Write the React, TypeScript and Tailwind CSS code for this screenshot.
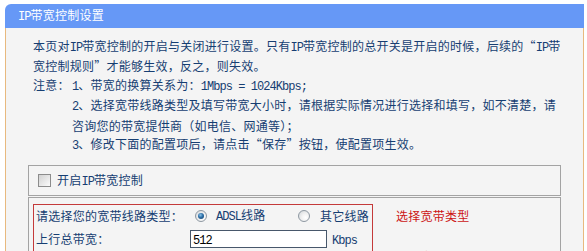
import React from "react";

const L = ({ children }: { children: React.ReactNode }) => (
  <span className="font-['Liberation_Mono',monospace] tracking-[-0.95px]">{children}</span>
);

const Radio = ({ checked }: { checked?: boolean }) => (
  <span className="inline-flex w-[12px] h-[12px] shrink-0 items-center justify-center rounded-full border border-[#8e98a2] bg-[radial-gradient(circle_at_65%_65%,#ffffff_0%,#f2f2f2_40%,#cfd3d7_100%)]">
    {checked ? (
      <span className="block w-[6px] h-[6px] rounded-full bg-[radial-gradient(circle_at_40%_35%,#8cc4ea_0%,#2d6ea6_45%,#143d66_100%)]" />
    ) : null}
  </span>
);

export default function App() {
  return (
    <div className="w-[587px] h-[251px] overflow-hidden bg-white pt-[4px] pl-[5px] font-['Noto_Sans_CJK_SC',sans-serif] text-[12px] text-[#163e72] tracking-[0.25px]">
      <div className="w-[579px]">
        <div className="h-[24px] bg-[#6698f6] rounded-tl-[6px] flex items-center pl-[13px] text-white leading-none">
          <span>
            <L>IP</L>带宽控制设置
          </span>
        </div>
        <div className="border-l border-r border-[#e8b97e] bg-[#f4f4f4] pt-[9px] pb-[20px]">
          <div className="pl-[27px] leading-[18.4px] whitespace-nowrap">
            <div>
              本页对<L>IP</L>带宽控制的开启与关闭进行设置。只有<L>IP</L>带宽控制的总开关是开启的时候，后续的“<L>IP</L>带
            </div>
            <div>宽控制规则”才能够生效，反之，则失效。</div>
            <div className="flex">
              <div className="w-[39px]">注意：</div>
              <div>
                <div>
                  <L>1</L>、带宽的换算关系为：<L>1Mbps = 1024Kbps;</L>
                </div>
                <div>
                  <L>2</L>、选择宽带线路类型及填写带宽大小时，请根据实际情况进行选择和填写，如不清楚，请
                </div>
                <div>咨询您的带宽提供商（如电信、网通等）；</div>
                <div>
                  <L>3</L>、修改下面的配置项后，请点击“保存”按钮，使配置项生效。
                </div>
              </div>
            </div>
          </div>

          <div className="mt-[9.6px] ml-[22px] w-[533px]">
            <div className="h-[31px] border border-[#a3a3a3] flex items-center pl-[9px]">
              <span className="block w-[13px] h-[13px] border border-[#8c8c8c] bg-gradient-to-br from-[#d2d2d2] to-[#fbfbfb]" />
              <span className="ml-[6px] leading-none">
                开启<L>IP</L>带宽控制
              </span>
            </div>

            <div className="mt-[1px] border border-[#a3a3a3] pt-[6px] pl-[4px] pb-[10px] flex">
              <div className="w-[340px] border border-[#c43a3a]">
                <div className="h-[21px] flex items-center">
                  <div className="w-[156px] pl-[2px]">请选择您的宽带线路类型：</div>
                  <div className="w-[108px] flex items-center pl-[5px]">
                    <Radio checked />
                    <span className="ml-[9px]">
                      <L>ADSL</L>线路
                    </span>
                  </div>
                  <div className="flex items-center">
                    <Radio />
                    <span className="ml-[10px]">其它线路</span>
                  </div>
                </div>
                <div className="h-[25px] flex">
                  <div className="w-[156px] pl-[2px] pt-[4px] leading-[18px]">上行总带宽：</div>
                  <div className="pt-[4px] flex items-start">
                    <div className="w-[137px] h-[18px] border border-[#47576b] bg-white pl-[2px] leading-[16px] text-black">
                      <L>512</L>
                    </div>
                    <span className="ml-[5px] leading-[18px]">
                      <L>Kbps</L>
                    </span>
                  </div>
                </div>
                <div className="h-[25px] flex">
                  <div className="w-[156px] pl-[2px] pt-[4px] leading-[18px]">下行总带宽：</div>
                  <div className="pt-[4px] flex items-start">
                    <div className="w-[137px] h-[18px] border border-[#47576b] bg-white pl-[2px] leading-[16px] text-black">
                      <L>4096</L>
                    </div>
                    <span className="ml-[5px] leading-[18px]">
                      <L>Kbps</L>
                    </span>
                  </div>
                </div>
              </div>
              <div className="ml-[23px] pt-[1px] text-[#cc1414]">
                <div className="h-[21px] flex items-center">选择宽带类型</div>
                <div className="mt-[22px] leading-[18px]">填写实际带宽值</div>
              </div>
            </div>
          </div>
        </div>
      </div>
    </div>
  );
}
